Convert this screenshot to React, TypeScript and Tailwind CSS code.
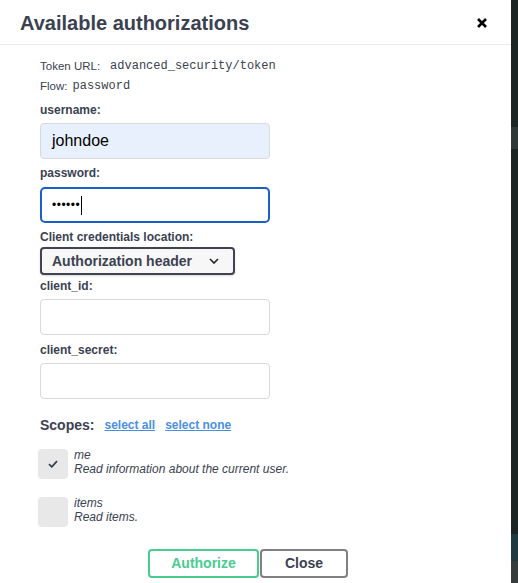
import React from "react";

const sans = "font-['Liberation_Sans',Arial,sans-serif]";
const mono = "font-['Liberation_Mono','Courier_New',monospace]";

const Label = ({ text, className = "" }: { text: string; className?: string }) => (
  <div className={`h-4 leading-4 text-[12px] font-bold text-[#3b4151] ${className}`}>{text}</div>
);

const Check = () => (
  <svg width="10" height="8" viewBox="0 0 10 8" fill="none">
    <path d="M1 4.2 L3.8 6.8 L9 1.2" stroke="#3b4151" strokeWidth="1.8" />
  </svg>
);

const Scope = ({ name, desc, checked, className = "" }: { name: string; desc: string; checked?: boolean; className?: string }) => (
  <div className={`flex items-start ml-[-2px] ${className}`}>
    <div className="w-[30px] h-[30px] rounded-[4px] bg-[#e8e8e8] flex items-center justify-center shrink-0">
      {checked && <Check />}
    </div>
    <div className="ml-[6px] mt-[-1px] text-[12px] leading-[14px] italic text-[#3b4151]">
      <div>{name}</div>
      <div>{desc}</div>
    </div>
  </div>
);

export default function App() {
  return (
    <div className={`flex w-[518px] h-[583px] overflow-hidden bg-white ${sans}`}>
      <div className="flex-1 flex flex-col">
        <div className="h-[45px] flex items-center justify-between pl-5 pr-[24px] border-b border-[#ebebeb]">
          <h2 className="text-[20px] font-bold text-[#3b4151] leading-none pt-[1px]">Available authorizations</h2>
          <svg width="10" height="10" viewBox="0 0 10 10" className="mt-[1px]">
            <path d="M1 1 L9 9 M9 1 L1 9" stroke="#000" strokeWidth="2.6" />
          </svg>
        </div>

        <div className="pl-10 pt-[11px]">
          <div className="h-5 leading-5 text-[11.5px] text-[#3b4151] flex items-center">
            Token URL:<span className={`${mono} text-[12px] ml-[10px]`}>advanced_security/token</span>
          </div>
          <div className="h-5 leading-5 text-[11.5px] text-[#3b4151] flex items-center">
            Flow:<span className={`${mono} text-[12px] ml-[5px]`}>password</span>
          </div>

          <Label text="username:" className="mt-[6px]" />
          <div className="mt-[5px] w-[230px] h-[36px] rounded-[4px] border border-[#d9d9d9] bg-[#e8f0fe] flex items-center pl-[11px] text-[16px] text-black">
            johndoe
          </div>

          <Label text="password:" className="mt-[6px]" />
          <div className="mt-[6px] w-[230px] h-[36px] rounded-[5px] border-2 border-[#1a5ec8] bg-white flex items-center pl-[10px] text-[12px] text-black">
            <span className="tracking-[0.5px]">••••••</span>
            <span className="w-px h-[19px] bg-black ml-[1px]" />
          </div>

          <Label text="Client credentials location:" className="mt-[6px]" />
          <div className="mt-[2px] w-[195px] h-[28px] rounded-[4px] border-2 border-[#41444e] bg-[#f7f7f7] flex items-center pl-[10px] pr-[14px] justify-between shadow-[0_1px_2px_rgba(0,0,0,0.15)]">
            <span className="text-[14px] font-bold text-[#3b4151]">Authorization header</span>
            <svg width="10" height="6" viewBox="0 0 10 6" fill="none">
              <path d="M1 1 L5 5 L9 1" stroke="#222" strokeWidth="1.6" />
            </svg>
          </div>

          <Label text="client_id:" className="mt-[3px]" />
          <div className="mt-[5px] w-[230px] h-[36px] rounded-[4px] border border-[#d9d9d9] bg-white" />

          <Label text="client_secret:" className="mt-[7px]" />
          <div className="mt-[5px] w-[230px] h-[36px] rounded-[4px] border border-[#d9d9d9] bg-white" />

          <div className="mt-[16px] h-5 flex items-center">
            <span className="text-[14px] font-bold text-[#3b4151]">Scopes:</span>
            <span className="ml-[10px] text-[12px] font-bold text-[#4990e2] underline">select all</span>
            <span className="ml-[10px] text-[12px] font-bold text-[#4990e2] underline">select none</span>
          </div>

          <Scope className="mt-[14px]" name="me" desc="Read information about the current user." checked />
          <Scope className="mt-[18px]" name="items" desc="Read items." />

          <div className="mt-[22px] flex pl-[108px]">
            <div className="w-[111px] h-[29px] rounded-[4px] border-2 border-[#49cc90] flex items-center justify-center text-[14px] font-bold text-[#49cc90]">
              Authorize
            </div>
            <div className="ml-px w-[88px] h-[29px] rounded-[4px] border-2 border-[#808080] flex items-center justify-center text-[14px] font-bold text-[#3b4151]">
              Close
            </div>
          </div>
        </div>
      </div>

      <div className="w-[7px] flex flex-col">
        <div className="h-[127px] bg-[#1c2424]" />
        <div className="h-[22px] bg-[#2f3737]" />
        <div className="flex-1 bg-[#1c2424]" />
        <div className="h-[27px] bg-[#1f3a40]" />
        <div className="h-[22px] bg-[#363b3b]" />
      </div>
    </div>
  );
}
